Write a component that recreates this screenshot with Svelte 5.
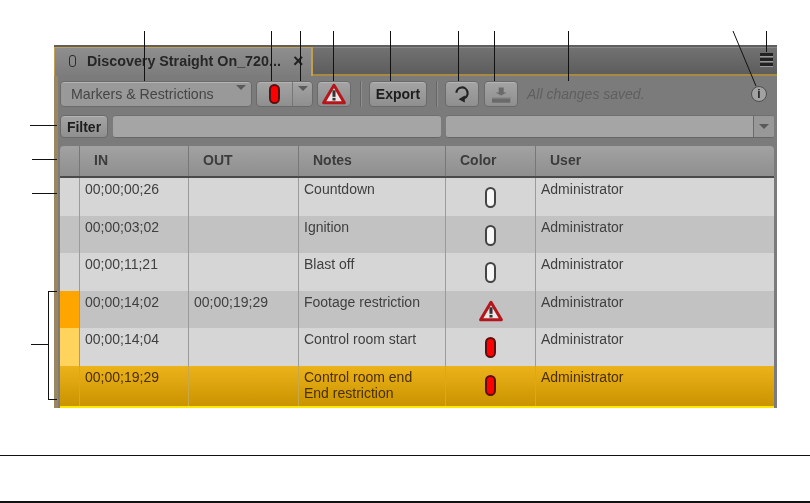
<script lang="ts">
	type Mark = "white" | "red" | "warn";
	type Row = { in: string; out: string; notes: string[]; mark: Mark; stripe?: string; h: number };

	const rows: Row[] = [
		{ in: "00;00;00;26", out: "", notes: ["Countdown"], mark: "white", h: 38 },
		{ in: "00;00;03;02", out: "", notes: ["Ignition"], mark: "white", h: 37 },
		{ in: "00;00;11;21", out: "", notes: ["Blast off"], mark: "white", h: 38 },
		{ in: "00;00;14;02", out: "00;00;19;29", notes: ["Footage restriction"], mark: "warn", stripe: "orange", h: 37 },
		{ in: "00;00;14;04", out: "", notes: ["Control room start"], mark: "red", stripe: "light", h: 38 },
		{ in: "00;00;19;29", out: "", notes: ["Control room end", "End restriction"], mark: "red", stripe: "sel", h: 42 },
	];

	// callout leader lines, drawn over the screenshot
	const leaders = [
		[144, 31, 144, 81], [271, 31, 271, 81], [300, 31, 300, 81], [333, 31, 333, 81],
		[390, 31, 390, 81], [458, 31, 458, 81], [494, 31, 494, 81], [568, 31, 568, 81],
		[733, 31, 756, 86], [766, 31, 766, 52],
		[30, 125, 57, 125], [32, 159, 57, 159], [32, 193, 57, 193],
		[31, 344, 48, 344], [48, 291, 48, 399], [48, 291, 57, 291], [48, 399, 57, 399],
	];
</script>

{#snippet warnIcon(w: number, h: number)}
	<svg width={w} height={h} viewBox="0 0 22 20" aria-hidden="true">
		<path d="M11 2 L20.5 18 H1.5 Z" fill="#ece6e6" stroke="#b5161c" stroke-width="2.8" stroke-linejoin="round" />
		<rect x="9.6" y="6.6" width="2.8" height="6" fill="#333" />
		<rect x="9.6" y="13.6" width="2.8" height="2.4" fill="#333" />
	</svg>
{/snippet}

{#snippet pill(color: string)}
	<span class="pill {color}"></span>
{/snippet}

<div class="page">
	<section class="panel">
		<header class="tabbar">
			<div class="tab">
				<span class="tab-pill"></span>
				<span class="tab-title">Discovery Straight On_720...</span>
				<span class="tab-close">×</span>
			</div>
			<div class="tab-rest">
				<div class="menu"><i></i><i></i><i></i></div>
			</div>
		</header>

		<div class="toolbar">
			<div class="btn select">
				<span>Markers &amp; Restrictions</span>
				<b class="caret"></b>
			</div>
			<div class="btn split">
				<span class="split-main">{@render pill("red")}</span>
				<span class="split-arrow"><b class="caret"></b></span>
			</div>
			<div class="btn warn">{@render warnIcon(24, 22)}</div>
			<span class="sep"></span>
			<div class="btn export">Export</div>
			<span class="sep"></span>
			<div class="btn icon">
				<svg width="20" height="20" viewBox="0 0 20 20" aria-hidden="true">
					<path d="M4.4 8.8 A5.6 5.6 0 1 1 12 14.3" fill="none" stroke="#222" stroke-width="2.2" />
					<path d="M12.8 11.6 V18.4 L6.6 15.2 Z" fill="#222" />
				</svg>
			</div>
			<div class="btn icon">
				<svg width="20" height="20" viewBox="0 0 20 20" aria-hidden="true">
					<path d="M7.7 3.5 H12.7 V8.5 H15.8 L10.2 11.5 L4.4 8.5 H7.7 Z" fill="#6a6a6a" />
					<rect x="1" y="13" width="18.3" height="5.7" fill="#6a6a6a" />
					<rect x="1" y="13" width="18.3" height="1.6" fill="#8a8a8a" />
				</svg>
			</div>
			<span class="saved">All changes saved.</span>
			<span class="info">i</span>
		</div>

		<div class="filterbar">
			<div class="btn filter">Filter</div>
			<div class="field grow"></div>
			<div class="field combo">
				<span class="combo-arrow"><b class="caret"></b></span>
			</div>
		</div>

		<div class="table">
			<div class="row head">
				<div class="cell stripe"></div>
				<div class="cell col-in">IN</div>
				<div class="cell col-out">OUT</div>
				<div class="cell col-notes">Notes</div>
				<div class="cell col-color">Color</div>
				<div class="cell col-user">User</div>
			</div>
			{#each rows as row, i}
				<div class="row body" class:alt={i % 2 === 1} class:selected={row.stripe === "sel"} style="height: {row.h}px">
					<div class="cell stripe {row.stripe ?? ''}"></div>
					<div class="cell col-in">{row.in}</div>
					<div class="cell col-out">{row.out}</div>
					<div class="cell col-notes">
						{#each row.notes as line}<div>{line}</div>{/each}
					</div>
					<div class="cell col-color">
						{#if row.mark === "warn"}
							{@render warnIcon(24, 22)}
						{:else}
							{@render pill(row.mark)}
						{/if}
					</div>
					<div class="cell col-user">Administrator</div>
				</div>
			{/each}
		</div>
	</section>

	<div class="rule first-rule"></div>
	<div class="rule last-rule"></div>

	<svg class="leaders" width="810" height="503" aria-hidden="true">
		{#each leaders as [x1, y1, x2, y2]}
			<line x1={x1 + (x1 === x2 ? 0.5 : 0)} y1={y1 + (y1 === y2 ? 0.5 : 0)} x2={x2 + (x1 === x2 ? 0.5 : 0)} y2={y2 + (y1 === y2 ? 0.5 : 0)} stroke="#111" stroke-width="1" />
		{/each}
	</svg>
</div>

<style>
	:global(body) {
		margin: 0;
		background: #fff;
	}

	.page {
		position: relative;
		width: 810px;
		height: 503px;
		overflow: hidden;
		padding: 45px 0 0 54px;
		box-sizing: border-box;
		font-family: "Liberation Sans", Arial, sans-serif;
		font-size: 14px;
		color: #333;
	}

	.leaders {
		position: absolute;
		left: 0;
		top: 0;
	}

	.panel {
		width: 723px;
		height: 363px;
		box-sizing: border-box;
		background: linear-gradient(90deg, #9a8660 4px, #7b7b7b 4px);
		filter: blur(0.35px);
		overflow: hidden;
	}

	.tabbar {
		display: flex;
		height: 31px;
		background: #666;
		box-sizing: border-box;
		border-top: 2px solid #5f5f5f;
	}

	.tab {
		display: flex;
		align-items: center;
		width: 259px;
		flex: none;
		box-sizing: border-box;
		padding: 0 0 3px 14px;
		background: linear-gradient(#8e8e8e, #7c7c7c);
		border-top: 1px solid #c2a052;
		border-left: 1px solid #c2a052;
		border-right: 2px solid #c2a052;
	}

	.tab-pill {
		flex: none;
		width: 5px;
		height: 10px;
		border: 1px solid #2c2c2c;
		border-radius: 3px;
		background: #8a8a8a;
		margin-right: 11px;
	}

	.tab-title {
		font-weight: 700;
		font-size: 14.3px;
		color: #262626;
		white-space: nowrap;
	}

	.tab-close {
		margin-left: 12px;
		font-weight: 700;
		font-size: 18px;
		line-height: 1;
		color: #222;
	}

	.tab-rest {
		flex: 1;
		display: flex;
		justify-content: flex-end;
		padding: 6px 4px 0 0;
		background: linear-gradient(#727272, #5d5d5d);
		border-bottom: 2px solid #a98a45;
		box-shadow: inset 0 1px 0 #888;
	}

	.menu {
		display: flex;
		flex-direction: column;
		gap: 2px;
		width: 13px;
	}

	.menu i {
		display: block;
		height: 3px;
		background: #222;
		box-shadow: 0 1px 0 #999;
	}

	.toolbar {
		display: flex;
		align-items: center;
		height: 39px;
		padding: 0 0 4px 6px;
		box-sizing: border-box;
	}

	.btn {
		display: flex;
		flex: none;
		align-items: center;
		justify-content: center;
		box-sizing: border-box;
		height: 26px;
		background: linear-gradient(#a4a4a4, #8f8f8f);
		border: 1px solid #6a6a6a;
		border-radius: 4px;
		box-shadow: inset 0 1px 0 #b4b4b4;
	}

	.select {
		width: 192px;
		justify-content: flex-start;
		padding: 0 0 0 10px;
		color: #454545;
		font-size: 14.2px;
		background: #999;
		position: relative;
	}

	.select .caret {
		position: absolute;
		right: 5px;
		top: 3px;
	}

	.caret {
		display: block;
		width: 0;
		height: 0;
		border-left: 5px solid transparent;
		border-right: 5px solid transparent;
		border-top: 5px solid #5a5a5a;
	}

	.split {
		width: 57px;
		margin-left: 4px;
		justify-content: flex-start;
		align-items: stretch;
	}

	.split-main {
		display: flex;
		align-items: center;
		justify-content: center;
		width: 35px;
		border-right: 1px solid #777;
	}

	.split-arrow {
		flex: 1;
		display: flex;
		justify-content: center;
		padding-top: 4px;
	}

	.pill {
		display: inline-block;
		box-sizing: border-box;
		width: 11px;
		height: 21px;
		border-radius: 6px;
		border: 2px solid #444;
		background: #f7f7f7;
	}

	.pill.red {
		background: #f00;
		border-color: #5a1010;
	}

	.split .pill {
		height: 20px;
	}

	.warn {
		width: 34px;
		margin-left: 4px;
	}

	.sep {
		flex: none;
		width: 1px;
		height: 26px;
		background: #666;
		box-shadow: 1px 0 0 #8f8f8f;
		margin: 0 8px 0 9px;
	}

	.export {
		width: 58px;
		font-weight: 700;
		font-size: 14px;
		color: #1d1d1d;
	}

	.icon {
		width: 34px;
		margin-right: 5px;
	}

	.saved {
		font-style: italic;
		color: #5f5f5f;
		font-size: 14px;
		margin-left: 4px;
		flex: 1;
		white-space: nowrap;
	}

	.info {
		display: flex;
		align-items: center;
		justify-content: center;
		box-sizing: border-box;
		width: 16px;
		height: 16px;
		margin-right: 10px;
		border: 1.5px solid #4e4e4e;
		border-radius: 50%;
		background: #a2a2a2;
		color: #222;
		font-weight: 700;
		font-size: 12px;
		line-height: 1;
	}

	.filterbar {
		display: flex;
		gap: 5px;
		height: 24px;
		padding: 0 3px 0 6px;
	}

	.filter {
		width: 48px;
		height: 23px;
		font-weight: 700;
		font-size: 14px;
		color: #1d1d1d;
	}

	.field {
		height: 23px;
		box-sizing: border-box;
		background: #a5a5a5;
		border-radius: 3px;
		border-bottom: 1px solid #666;
		border-top: 1px solid #6f6f6f;
	}

	.grow {
		width: 328px;
	}

	.combo {
		flex: 1;
		display: flex;
		justify-content: flex-end;
		overflow: hidden;
	}

	.combo-arrow {
		display: flex;
		align-items: center;
		justify-content: center;
		width: 20px;
		background: #989898;
		border-left: 1px solid #6a6a6a;
	}

	.table {
		margin: 7px 3px 0 6px;
	}

	.row {
		display: grid;
		grid-template-columns: 19px 109px 110px 147px 90px 1fr;
	}

	.head {
		height: 32px;
		box-sizing: border-box;
		background: linear-gradient(#a2a2a2, #8f8f8f);
		border-radius: 4px 4px 0 0;
		border-bottom: 2px solid #4a4a4a;
		font-weight: 700;
		font-size: 14px;
		color: #3c3c3c;
	}

	.head .cell {
		display: flex;
		align-items: center;
		border-left: 1px solid #777;
		padding: 0 0 2px 14px;
	}

	.head .stripe {
		border-left: 0;
		padding: 0;
	}

	.body {
		box-sizing: border-box;
		background: #d6d6d6;
		color: #3f3f3f;
		line-height: 16px;
	}

	.body.alt {
		background: #c2c2c2;
	}

	.body.selected {
		background: linear-gradient(#ecb21a, #c99400);
		border-bottom: 2px solid #ffe900;
		color: #4a2f00;
	}

	.body .cell {
		border-left: 1px solid #9b9b9b;
		padding: 3px 0 0 5px;
		min-width: 0;
		white-space: nowrap;
	}

	.body.selected .cell {
		border-left-color: #c9a84a;
	}

	.body .stripe {
		border-left: 0;
		padding: 0;
	}

	.stripe.orange {
		background: #ffa500;
	}

	.stripe.light {
		background: #ffd35c;
	}

	.body .col-color {
		display: flex;
		justify-content: center;
		padding: 9px 0 0;
	}

	.rule {
		position: absolute;
		left: 0;
		width: 810px;
		background: #111;
	}

	.first-rule {
		top: 455px;
		height: 1px;
	}

	.last-rule {
		top: 501px;
		height: 2px;
	}
</style>
